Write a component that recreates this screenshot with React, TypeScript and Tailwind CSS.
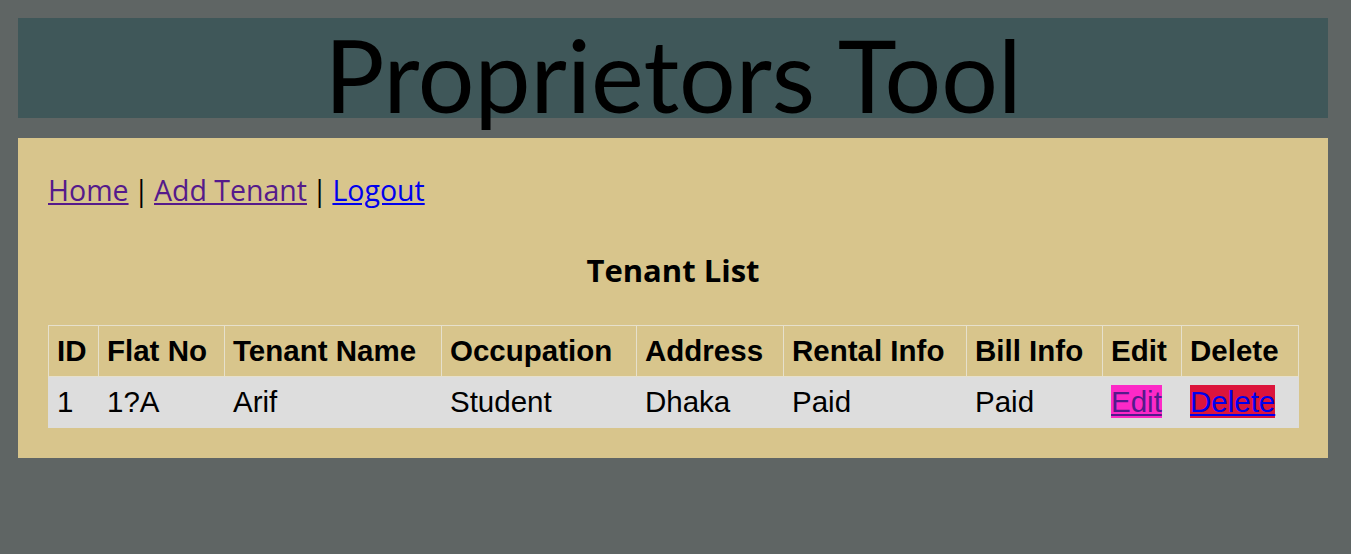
import React from "react";

const cols = [
  { h: "ID", w: 50 },
  { h: "Flat No", w: 126 },
  { h: "Tenant Name", w: 217 },
  { h: "Occupation", w: 195 },
  { h: "Address", w: 147 },
  { h: "Rental Info", w: 183 },
  { h: "Bill Info", w: 136 },
  { h: "Edit", w: 79 },
  { h: "Delete", w: 117 },
];

export default function App() {
  return (
    <div className="min-h-[554px] w-full bg-[#5f6564] pt-[18px] px-[18px] pb-[96px]">
      <div className="w-[1310px] h-[100px] bg-[#3f5759] flex justify-center">
        <h1 className="m-0 text-[100px] leading-[124px] mt-[-6px] text-black font-['Lato',_sans-serif] font-normal whitespace-nowrap h-[100px]">
          Proprietors Tool
        </h1>
      </div>
      <div className="w-[1310px] mt-[20px] bg-[#d8c58c] p-[30px]">
        <div className="font-['Open_Sans',_sans-serif] text-[28.5px] leading-[44px] text-black [word-spacing:-2.5px]">
          <a href="#" className="text-[#551a8b] underline [word-spacing:0px]">Home</a> |{" "}
          <a href="#" className="text-[#551a8b] underline [word-spacing:0px]">Add Tenant</a> |{" "}
          <a href="#" className="text-[#0000ee] underline [word-spacing:0px]">Logout</a>
        </div>
        <h2 className="mt-[38px] mb-[35px] text-center font-['Open_Sans',_sans-serif] font-bold text-[31px] leading-[40px] text-black">
          Tenant List
        </h2>
        <table className="w-[1250px] table-fixed border-collapse font-['Liberation_Sans',_Arial,_sans-serif] text-[29.5px] text-black">
          <colgroup>
            {cols.map((c) => (
              <col key={c.h} style={{ width: c.w }} />
            ))}
          </colgroup>
          <thead>
            <tr>
              {cols.map((c) => (
                <th
                  key={c.h}
                  className="border border-[#e6e0cc] h-[51px] px-[8px] text-left font-bold whitespace-nowrap"
                >
                  {c.h}
                </th>
              ))}
            </tr>
          </thead>
          <tbody>
            <tr className="bg-[#dddddd]">
              {["1", "1?A", "Arif", "Student", "Dhaka", "Paid", "Paid"].map((v, i) => (
                <td key={i} className="border border-[#dddddd] h-[51px] px-[8px] whitespace-nowrap">
                  {v}
                </td>
              ))}
              <td className="border border-[#dddddd] h-[51px] px-[8px]">
                <a href="#" className="bg-[#fd29c7] text-[#551a8b] underline">Edit</a>
              </td>
              <td className="border border-[#dddddd] h-[51px] px-[8px]">
                <a href="#" className="bg-[#dc143c] text-[#0000ee] underline">Delete</a>
              </td>
            </tr>
          </tbody>
        </table>
      </div>
    </div>
  );
}
